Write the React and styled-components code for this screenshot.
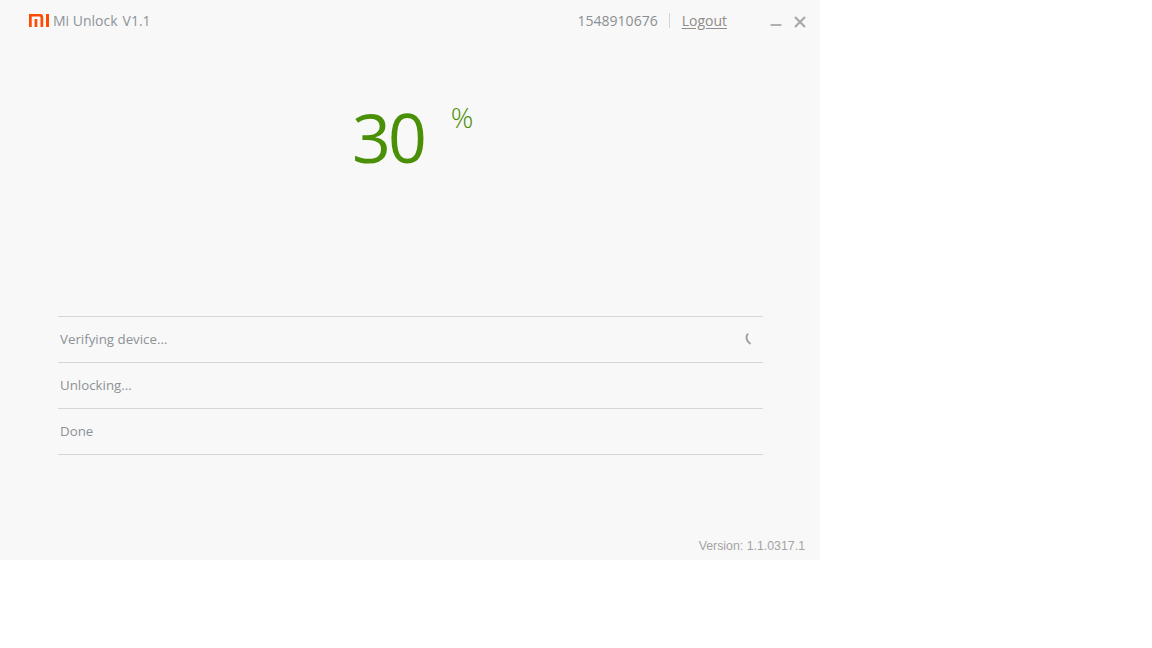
import React from 'react'
import styled, {createGlobalStyle} from 'styled-components'

const GlobalStyle = createGlobalStyle`
  html, body {
    margin: 0;
    padding: 0;
    background: #fff;
  }
`

const Window = styled.div`
  width: 820px;
  height: 560px;
  background: #f8f8f8;
  display: flex;
  flex-direction: column;
  font-family: "Open Sans", "Noto Sans", sans-serif;
  color: #8a8f93;
`

const Header = styled.header`
  height: 42px;
  flex: none;
  display: flex;
  align-items: center;
  padding: 0 14px 0 29px;
`

const Brand = styled.div`
  display: flex;
  align-items: center;
  font-size: 14px;
  line-height: 20px;
  color: #8d9499;
  padding-bottom: 1px;
`

const Version = styled.span`
  margin-left: 5px;
`

const Account = styled.div`
  margin-left: auto;
  display: flex;
  align-items: center;
  font-size: 14px;
  line-height: 20px;
  padding-bottom: 1px;
`

const Divider = styled.span`
  width: 1px;
  height: 15px;
  background: #d4d4d4;
  margin: 0 12px 0 11px;
`

const Logout = styled.a`
  color: #8f8c89;
  text-decoration: underline;
  text-underline-offset: 2px;
`

const WindowButtons = styled.div`
  display: flex;
  align-items: center;
  gap: 12px;
  margin-left: 43px;
  padding-top: 3px;
`

const Progress = styled.div`
  box-sizing: border-box;
  height: 274px;
  flex: none;
  display: flex;
  align-items: flex-start;
  padding: 55px 0 0 352px;
  color: #4a9006;
`

const Number = styled.span`
  font-size: 68px;
  line-height: 80px;
  letter-spacing: -3px;
`

const Percent = styled.span`
  font-size: 28px;
  font-weight: 300;
  line-height: 40px;
  margin-left: 27px;
`

const Steps = styled.ul`
  list-style: none;
  margin: 0 57px 0 58px;
  padding: 0;
  border-top: 1px solid #d6d6d6;
`

const Step = styled.li`
  box-sizing: border-box;
  height: 46px;
  display: flex;
  align-items: center;
  justify-content: space-between;
  padding: 0 10px 1px 2px;
  font-size: 13.3px;
  color: #8b9297;
  border-bottom: 1px solid #d6d6d6;
`

const Footer = styled.footer`
  margin-top: auto;
  padding: 0 15px 7px 0;
  text-align: right;
  font-family: "Liberation Sans", Arial, sans-serif;
  font-size: 12.35px;
  color: #a3a3a3;
`

const MiLogo = () => (
  <svg width="20" height="13" viewBox="0 0 20 13" style={{marginRight: 4}}>
    <path fill="#ff4a00" d="M0 0h11a3.2 3.2 0 0 1 3.2 3.2V13h-2.7V3.6a1 1 0 0 0-1-1H2.7V13H0z" />
    <path fill="#ff4a00" d="M5.6 5h2.7v8H5.6zM17 0h3v13h-3z" />
  </svg>
)

const MinimizeIcon = () => (
  <svg width="12" height="12" viewBox="0 0 12 12">
    <rect x="0.5" y="8" width="11" height="2" fill="#b0b0b0" />
  </svg>
)

const CloseIcon = () => (
  <svg width="12" height="12" viewBox="0 0 12 12">
    <path d="M1 1l10 10M11 1L1 11" stroke="#a8a8a8" strokeWidth="2.2" fill="none" />
  </svg>
)

const Spinner = () => (
  <svg width="8" height="14" viewBox="0 0 8 14">
    <path d="M3 1.5C0.6 4.5 0.8 8.5 5.5 12" stroke="#a0a0a0" strokeWidth="2" fill="none" />
  </svg>
)

const steps = [
  {name: 'Verifying device...', busy: true},
  {name: 'Unlocking...'},
  {name: 'Done'}
]

export default function App() {
  return (
    <>
      <GlobalStyle />
      <Window>
        <Header>
          <Brand>
            <MiLogo />
            Mi Unlock
            <Version>V1.1</Version>
          </Brand>
          <Account>
            1548910676
            <Divider />
            <Logout>Logout</Logout>
            <WindowButtons>
              <MinimizeIcon />
              <CloseIcon />
            </WindowButtons>
          </Account>
        </Header>
        <Progress>
          <Number>30</Number>
          <Percent>%</Percent>
        </Progress>
        <Steps>
          {steps.map((step) => (
            <Step key={step.name}>
              {step.name}
              {step.busy && <Spinner />}
            </Step>
          ))}
        </Steps>
        <Footer>Version: 1.1.0317.1</Footer>
      </Window>
    </>
  )
}
